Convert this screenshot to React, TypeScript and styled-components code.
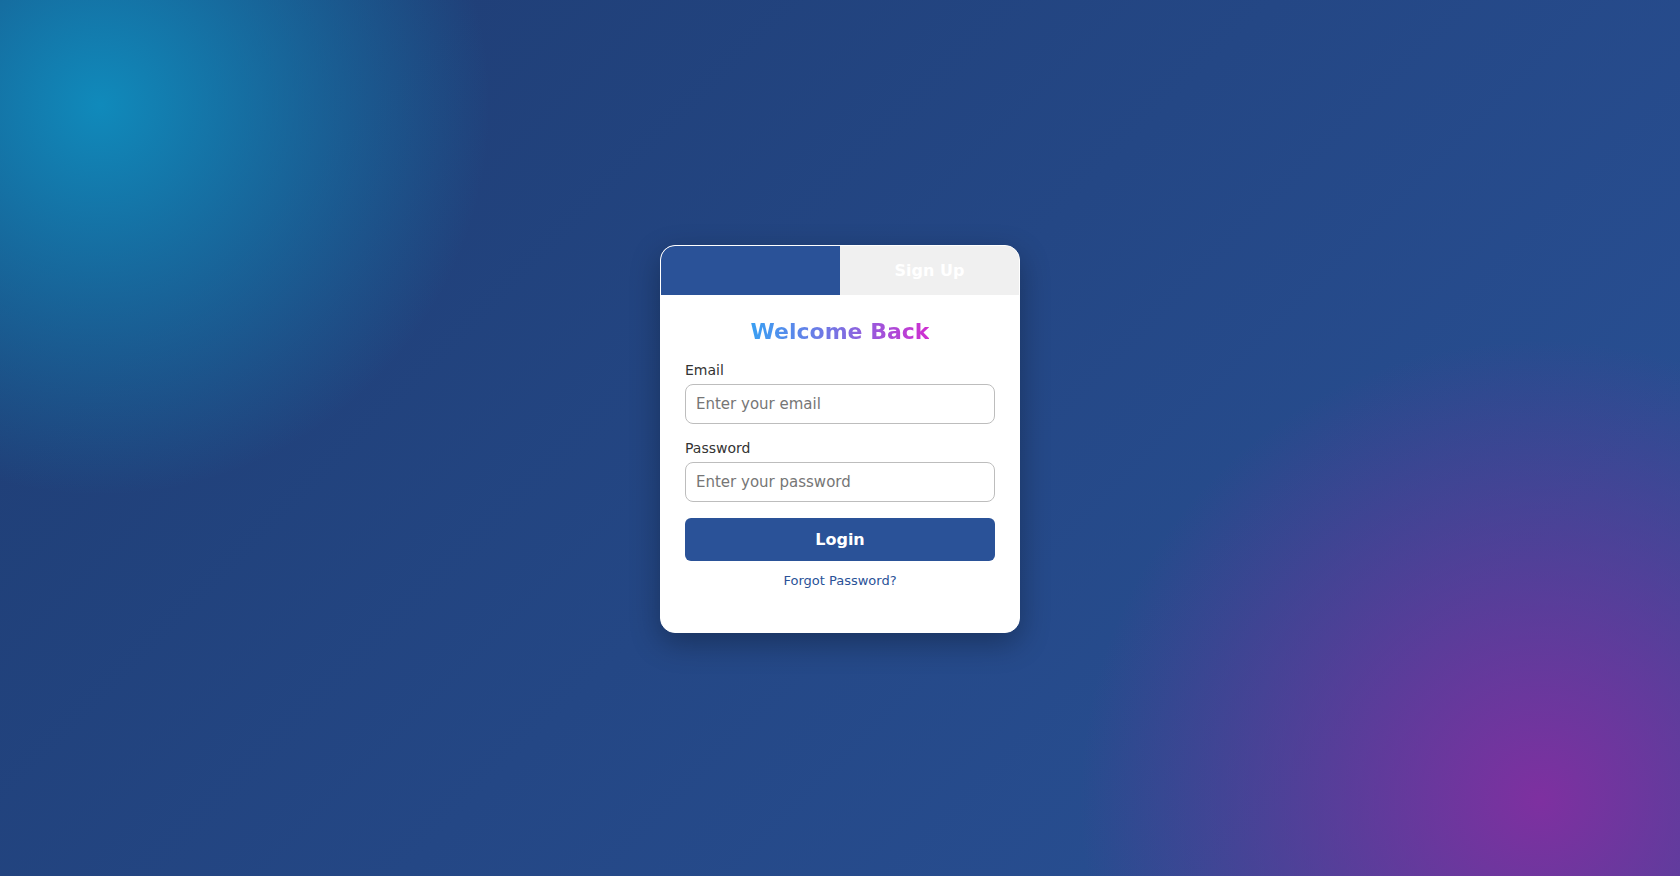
import React, { useState } from "react";
import styled, { createGlobalStyle } from "styled-components";

const GlobalStyle = createGlobalStyle`
  html, body, #root {
    margin: 0;
    padding: 0;
    height: 100%;
  }
  * { box-sizing: border-box; }
  body {
    font-family: "DejaVu Sans", Verdana, sans-serif;
    background:
      radial-gradient(circle 390px at 100px 105px, rgba(16, 138, 187, 1) 0%, rgba(16, 138, 187, 0.55) 45%, rgba(16, 138, 187, 0) 100%),
      radial-gradient(circle 460px at 1540px 800px, rgba(126, 48, 160, 1) 0%, rgba(126, 48, 160, 0.55) 45%, rgba(126, 48, 160, 0) 100%),
      linear-gradient(135deg, #1e3c72 0%, #2a5298 100%);
    background-repeat: no-repeat;
  }
`;

const Page = styled.div`
  min-height: 100vh;
  padding-top: 2px;
  display: flex;
  align-items: center;
  justify-content: center;
`;

const Card = styled.div`
  width: 360px;
  background: #ffffff;
  border: 1px solid #ffffff;
  border-radius: 15px;
  overflow: hidden;
  box-shadow: 0 10px 30px rgba(0, 0, 0, 0.3);
`;

const Tabs = styled.div`
  display: grid;
  grid-template-columns: 1fr 1fr;
`;

const Tab = styled.button<{ $active?: boolean }>`
  border: none;
  margin: 0;
  padding: 15px 0;
  font-family: "DejaVu Sans", Verdana, sans-serif;
  font-size: 16px;
  font-weight: bold;
  line-height: normal;
  cursor: pointer;
  background: ${(p) => (p.$active ? "#2a5298" : "#f0f0f0")};
  color: ${(p) => (p.$active ? "#2a5298" : "#ffffff")};
  border-top-left-radius: ${(p) => (p.$active ? "14px" : "0")};
`;

const Form = styled.form`
  display: flex;
  flex-direction: column;
  padding: 24px 24px 44px;
`;

const Title = styled.h2`
  margin: 0 auto 18px;
  font-size: 22px;
  font-weight: bold;
  line-height: normal;
  background: linear-gradient(90deg, #3a9ff2 0%, #7b70e2 50%, #d02ed0 100%);
  -webkit-background-clip: text;
  background-clip: text;
  color: transparent;
`;

const Group = styled.div`
  display: flex;
  flex-direction: column;
  margin-bottom: 16px;
`;

const Label = styled.label`
  font-size: 14px;
  line-height: normal;
  color: #333333;
  margin-bottom: 6px;
`;

const Input = styled.input`
  width: 100%;
  padding: 10px;
  border: 1px solid #bdbdbd;
  border-radius: 8px;
  font-family: "DejaVu Sans", Verdana, sans-serif;
  font-size: 15px;
  line-height: normal;
  color: #333;
  outline: none;
  &::placeholder {
    color: #767676;
  }
`;

const Submit = styled.button`
  width: 100%;
  padding: 12px;
  border: none;
  border-radius: 6px;
  background: #2a5298;
  color: #ffffff;
  font-family: "DejaVu Sans", Verdana, sans-serif;
  font-size: 16px;
  font-weight: bold;
  line-height: normal;
  cursor: pointer;
`;

const Forgot = styled.a`
  margin-top: 12px;
  align-self: center;
  font-size: 13px;
  line-height: normal;
  color: #2a5298;
  text-decoration: none;
  cursor: pointer;
`;

export default function App() {
  const [tab, setTab] = useState<"login" | "signup">("login");
  return (
    <>
      <GlobalStyle />
      <Page>
        <Card>
          <Tabs>
            <Tab type="button" $active={tab === "login"} onClick={() => setTab("login")}>
              Login
            </Tab>
            <Tab type="button" $active={tab === "signup"} onClick={() => setTab("signup")}>
              Sign Up
            </Tab>
          </Tabs>
          <Form onSubmit={(e) => e.preventDefault()}>
            <Title>Welcome Back</Title>
            <Group>
              <Label htmlFor="email">Email</Label>
              <Input id="email" type="email" placeholder="Enter your email" />
            </Group>
            <Group>
              <Label htmlFor="password">Password</Label>
              <Input id="password" type="password" placeholder="Enter your password" />
            </Group>
            <Submit type="submit">Login</Submit>
            <Forgot>Forgot Password?</Forgot>
          </Form>
        </Card>
      </Page>
    </>
  );
}
